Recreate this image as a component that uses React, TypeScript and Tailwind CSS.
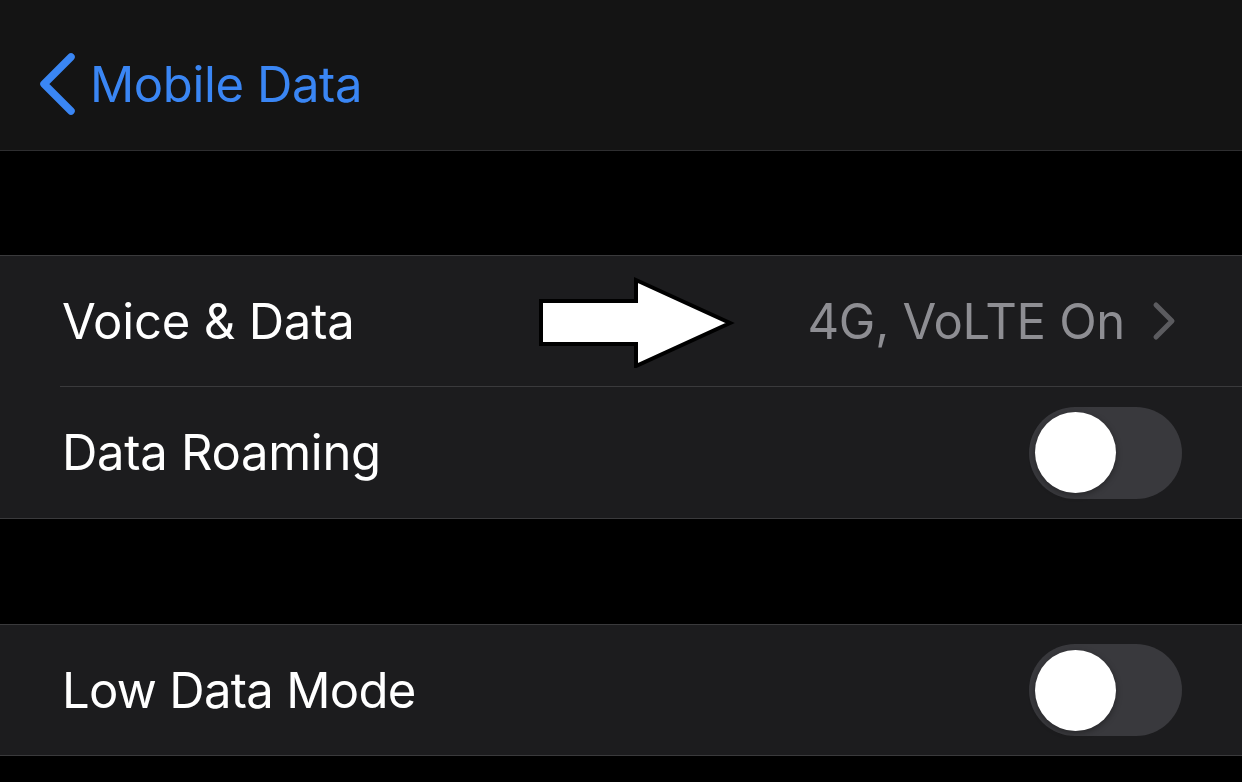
import { useState } from 'react';

function Toggle({ on }: { on: boolean }) {
  return (
    <div className="w-[153px] h-[92px] rounded-full bg-[#39393d] flex items-center px-[6px]">
      <div
        className={`w-[81px] h-[81px] rounded-full bg-white shadow-[0_2px_6px_rgba(0,0,0,0.35)] ${on ? 'ml-auto' : ''}`}
      />
    </div>
  );
}

function Arrow() {
  return (
    <svg className="absolute left-[536px] top-[20px]" width="200" height="92" viewBox="0 0 200 92">
      <path
        d="M5 25 H100 V4 L194 47 L100 90 V68 H5 Z"
        fill="#ffffff"
        stroke="#000000"
        strokeWidth="4"
        strokeLinejoin="miter"
      />
    </svg>
  );
}

export default function App() {
  const [roaming] = useState(false);
  const [lowData] = useState(false);

  return (
    <div
      className="w-[1242px] h-[782px] bg-black overflow-hidden text-white"
      style={{ fontFamily: 'Inter, "Noto Sans", sans-serif' }}
    >
      <div className="h-[151px] bg-[#141414] border-b border-[#2e2e30] flex items-center pl-[38px] pt-[18px]">
        <svg width="40" height="64" viewBox="0 0 40 64" className="mr-[12px]">
          <path d="M33 5 L6 32 L33 59" fill="none" stroke="#3a86f4" strokeWidth="7.5" strokeLinecap="round" strokeLinejoin="round" />
        </svg>
        <span className="text-[49px] leading-none tracking-[-0.4px] text-[#3a86f4]">Mobile Data</span>
      </div>

      <div className="h-[104px]" />

      <div className="bg-[#1c1c1e] border-y border-[#3a3a3c]">
        <div className="relative h-[130px] flex items-center pl-[62px] pr-[66px]">
          <span className="text-[49px] leading-none tracking-[-0.2px]">Voice &amp; Data</span>
          <Arrow />
          <span className="ml-auto text-[49px] leading-none tracking-[-0.3px] text-[#8e8e93]">4G, VoLTE On</span>
          <svg width="24" height="40" viewBox="0 0 24 40" className="ml-[27px]">
            <path d="M4 4 L20 20 L4 36" fill="none" stroke="#5b5b5f" strokeWidth="5" strokeLinecap="round" strokeLinejoin="round" />
          </svg>
        </div>
        <div className="ml-[60px] h-px bg-[#3a3a3c]" />
        <div className="h-[131px] flex items-center pl-[62px] pr-[60px]">
          <span className="text-[49px] leading-none tracking-[-0.3px]">Data Roaming</span>
          <div className="ml-auto">
            <Toggle on={roaming} />
          </div>
        </div>
      </div>

      <div className="h-[105px]" />

      <div className="bg-[#1c1c1e] border-y border-[#3a3a3c]">
        <div className="h-[130px] flex items-center pl-[62px] pr-[60px]">
          <span className="text-[49px] leading-none tracking-[-0.7px]">Low Data Mode</span>
          <div className="ml-auto">
            <Toggle on={lowData} />
          </div>
        </div>
      </div>
    </div>
  );
}
